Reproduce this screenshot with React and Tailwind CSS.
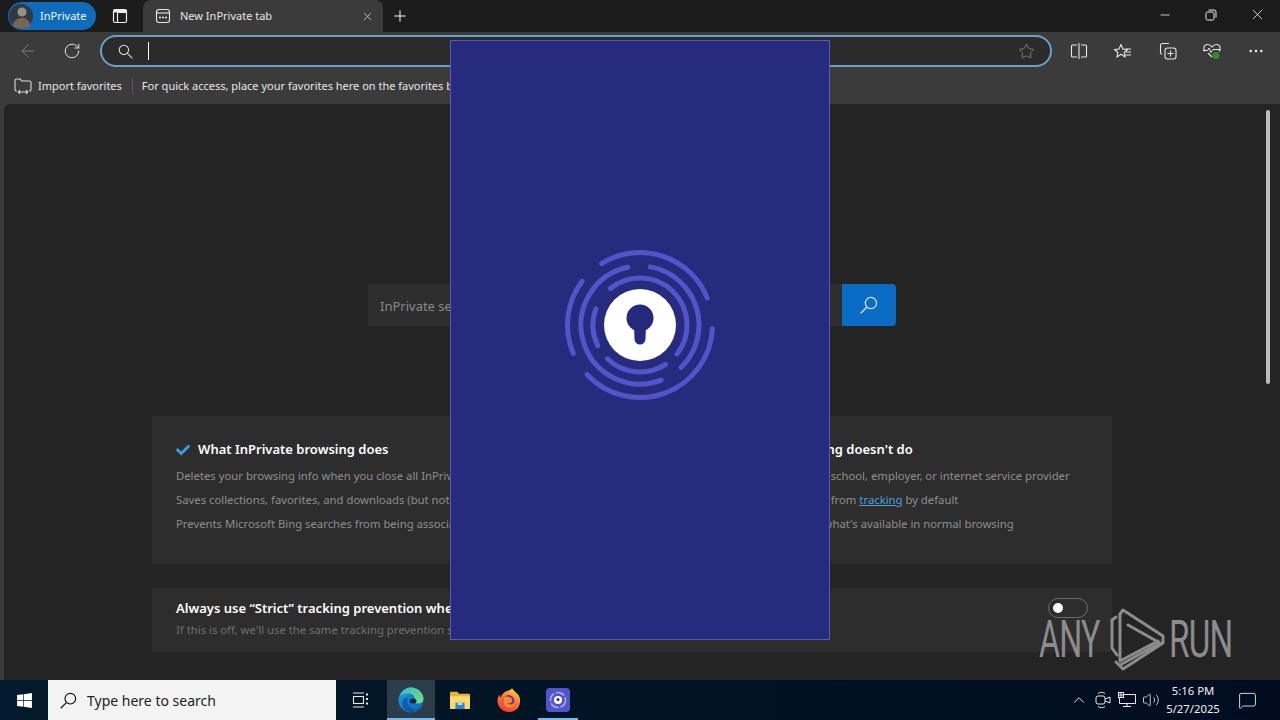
import React from "react";
import {
  ArrowLeft,
  RotateCw,
  Star,
  Plus,
  X,
  Minus,
  MoreHorizontal,
  ChevronUp,
  Volume2,
  MessageSquare,
} from "lucide-react";
import { FaWindows, FaCheck } from "react-icons/fa";

const FONT = "font-['Noto_Sans','Open_Sans',sans-serif]";

// logo rings: radius, from angle, to angle (degrees clockwise from the top)
const RINGS = [
  [72.5, -32, 68],
  [72.5, -113, -53],
  [72.5, 93, 227],
  [59, 159, 348],
  [59, 10, 136],
  [47, -39, 128],
  [47, -116, -70],
  [47, 147, 224],
];

const arcPath = (r, from, to) => {
  const pt = (a) => {
    const rad = (a * Math.PI) / 180;
    return `${(80 + r * Math.sin(rad)).toFixed(2)} ${(80 - r * Math.cos(rad)).toFixed(2)}`;
  };
  return `M${pt(from)} A${r} ${r} 0 ${to - from > 180 ? 1 : 0} 1 ${pt(to)}`;
};

const KeyLogo = () => (
  <svg width="160" height="160" viewBox="0 0 160 160">
    {RINGS.map(([r, from, to]) => (
      <path
        key={`${r}-${from}`}
        d={arcPath(r, from, to)}
        fill="none"
        stroke="#5155c8"
        strokeWidth="5"
        strokeLinecap="round"
      />
    ))}
    <circle cx="80" cy="80" r="36" fill="#fff" />
    <circle cx="80" cy="73" r="13.5" fill="#262a7c" />
    <path d="M74 78h12l-.5 16a5.5 5.5 0 0 1-11 0z" fill="#262a7c" />
  </svg>
);

// magnifier with a long thin handle; flip puts the handle lower-left
const SearchGlyph = ({ size = 16, color = "#e0e0e0", flip = false }) => (
  <svg
    width={size}
    height={size}
    viewBox="0 0 16 16"
    fill="none"
    stroke={color}
    strokeWidth="1.100"
    className={flip ? "-scale-x-100" : ""}
  >
    <circle cx="6.300" cy="6.300" r="5" />
    <path d="M10 10l5.300 5.300" />
  </svg>
);

const Avatar = () => (
  <svg width="24" height="24" viewBox="0 0 24 24">
    <circle cx="12" cy="12" r="12" fill="#2f3a44" />
    <circle cx="13" cy="8" r="4.500" fill="#9b8f84" />
    <path d="M4 22c0-5 4-8 9-8s8 3 8 8c-2 2-5 2-8 2s-7 0-9-2z" fill="#7a6553" />
  </svg>
);

const SplitIcon = () => (
  <svg width="18" height="18" viewBox="0 0 18 18" fill="none" stroke="#e8e8e8" strokeWidth="1.100">
    <path d="M7 3H2.500a1 1 0 0 0-1 1v10a1 1 0 0 0 1 1H7M11 3h4.500a1 1 0 0 1 1 1v10a1 1 0 0 1-1 1H11M9 1v16" />
  </svg>
);

const FavListIcon = () => (
  <svg width="20" height="18" viewBox="0 0 20 18" fill="none" stroke="#e8e8e8" strokeWidth="1.100">
    <path d="M8 1.500l2 4.600 4.600.4-3.500 3 1 4.600L8 11.200l-4.100 2.900 1-4.600-3.500-3 4.600-.4z" strokeLinejoin="round" transform="translate(0 1)" />
    <path d="M13 7h5M13 10h5M12 13h6" />
  </svg>
);

const CollectionsIcon = () => (
  <svg width="18" height="18" viewBox="0 0 18 18" fill="none" stroke="#e8e8e8" strokeWidth="1.100">
    <path d="M10 1.500H3.500a2 2 0 0 0-2 2V10c0 1 .5 2 1.500 2.500" />
    <rect x="6" y="6" width="11" height="11" rx="2.500" />
    <path d="M11.500 8.500v6M8.500 11.500h6" />
  </svg>
);

const HealthIcon = () => (
  <svg width="20" height="18" viewBox="0 0 20 18" fill="none">
    <path
      d="M3 9.500C1 7 1.500 2.500 5.500 2.500c2 0 3.500 1 4.500 2.500 1-1.500 2.500-2.500 4.500-2.500 4 0 4.500 4.500 2.500 7M10 15L6 11"
      stroke="#e8e8e8"
      strokeWidth="1.100"
    />
    <path d="M1 8.500h4.500l1.500-2.500 2 4.500 2-3h7" stroke="#e8e8e8" strokeWidth="1" />
    <circle cx="14" cy="13.500" r="3.500" fill="#2f8a3c" />
  </svg>
);

const ImportIcon = () => (
  <svg width="18" height="18" viewBox="0 0 18 18" fill="none" stroke="#dcdcdc" strokeWidth="1.100">
    <path d="M3 14H2.500a1.500 1.500 0 0 1-1.500-1.500v-9A1.500 1.500 0 0 1 2.500 2h3.500l2 2h7.500A1.500 1.500 0 0 1 17 5.500v7a1.500 1.500 0 0 1-1.500 1.500H15" />
    <path d="M4.500 15h9M6 13.200L4.300 15 6 16.800M12 13.200l1.700 1.800-1.700 1.800" />
  </svg>
);

const TabIcon = () => (
  <svg width="16" height="16" viewBox="0 0 16 16" fill="none" stroke="#e8e8e8" strokeWidth="1.100">
    <rect x="1.500" y="1.500" width="13" height="13" rx="2.500" />
    <path d="M1.500 5h13" />
    <circle cx="5" cy="9.500" r=".5" fill="#e8e8e8" />
    <circle cx="8" cy="9.500" r=".5" fill="#e8e8e8" />
    <circle cx="11" cy="9.500" r=".5" fill="#e8e8e8" />
  </svg>
);

const VerticalTabsIcon = () => (
  <svg width="16" height="16" viewBox="0 0 16 16" fill="none" stroke="#ececec" strokeWidth="1.200">
    <rect x="1.500" y="1.500" width="13" height="13" rx="1.500" />
    <path d="M5.500 5v9.500M5.500 4.500h9" />
    <path d="M2 2h13v2.500H2z" fill="#ececec" stroke="none" />
  </svg>
);

const RestoreIcon = () => (
  <svg width="12" height="12" viewBox="0 0 12 12" fill="none" stroke="#eee" strokeWidth="1">
    <rect x="1" y="3" width="8" height="8" rx="1.500" />
    <path d="M3.500 1h5.500a2 2 0 0 1 2 2v5.500" />
  </svg>
);

const EdgeIcon = () => (
  <svg width="26" height="26" viewBox="0 0 26 26">
    <defs>
      <linearGradient id="edgeBlue" x1="0" y1="0" x2="1" y2="1">
        <stop offset="0" stopColor="#1f9fe0" />
        <stop offset="1" stopColor="#0c5fb8" />
      </linearGradient>
      <linearGradient id="edgeGreen" x1="0" y1="0" x2="1" y2="1">
        <stop offset="0" stopColor="#2fc2c4" />
        <stop offset="1" stopColor="#7fdc7a" />
      </linearGradient>
    </defs>
    <circle cx="13" cy="13" r="12.500" fill="url(#edgeBlue)" />
    <path d="M2 9C4 3 9 .5 13 .5c7 0 12.500 5.500 12.500 11.500 0 3-2.500 4.500-5.500 4.500-2.500 0-4-1-4-2 2-3 0-8-5-8C7 6.500 4 7 2 9z" fill="url(#edgeGreen)" />
    <path d="M10 11c-2 4 1 10 7 12-1 1-2.500 2-4 2-4 0-8-3-9-8 0-3 3-7 6-6z" fill="#0b3f8f" opacity=".55" />
    <ellipse cx="15" cy="14" rx="3.500" ry="2.500" fill="#062538" />
  </svg>
);

const FolderIcon = () => (
  <svg width="22" height="20" viewBox="0 0 24 22">
    <path d="M1 3a1 1 0 0 1 1-1h7l2 2h11a1 1 0 0 1 1 1v3H1z" fill="#e2b23f" />
    <path d="M1 7h22v13a1 1 0 0 1-1 1H2a1 1 0 0 1-1-1z" fill="#fbd96b" />
    <path d="M7 14h10v7H7z" fill="#2f86c9" />
    <path d="M9.500 14h5v2.500h-5z" fill="#bcd9ef" />
  </svg>
);

const FirefoxIcon = () => (
  <svg width="24" height="24" viewBox="0 0 24 24">
    <defs>
      <linearGradient id="foxFlame" x1="0.7" y1="0" x2="0.2" y2="1">
        <stop offset="0" stopColor="#ffd23f" />
        <stop offset=".45" stopColor="#ff7a2a" />
        <stop offset="1" stopColor="#f0343c" />
      </linearGradient>
    </defs>
    <path d="M15 0c1 3 6 5 7.500 9 2 6-1 15-10.500 15C5 24 .5 18.500.5 13c0-3 1-5 2-6.500 0 1.500.5 2.500 1.500 3 .5-3 3-5.500 6-6.500 2-.5 4.500-1 5-3z" fill="url(#foxFlame)" />
    <circle cx="11.500" cy="13" r="6" fill="#6a2fb5" />
    <path d="M7 9c3-1 7 0 8 2 1 3-2 5-5 4 2 2 6 2 8-1 0 4-4 6-7 5.500C7 19 5 15 7 9z" fill="#ff8a2a" />
  </svg>
);

const AppIcon = () => (
  <svg width="24" height="24" viewBox="0 0 24 24">
    <rect width="24" height="24" rx="4" fill="#5155c8" />
    <circle cx="12" cy="12" r="7.500" fill="none" stroke="#aeb0ee" strokeWidth="1.500" strokeDasharray="9 2" />
    <circle cx="12" cy="12" r="4" fill="#fff" />
    <circle cx="12" cy="11.500" r="1.500" fill="#262a7c" />
  </svg>
);

const TrayCamera = () => (
  <svg width="16" height="18" viewBox="0 0 16 18" fill="none" stroke="#e8e8e8" strokeWidth="1">
    <rect x="1" y="5" width="9" height="8" rx="2" />
    <path d="M10 8l5-2v6l-5-2M3 2.500c2-1.500 5-1.500 7 0M3 15.500c2 1.500 5 1.500 7 0" />
  </svg>
);

const TrayNetwork = () => (
  <svg width="18" height="16" viewBox="0 0 18 16" fill="none" stroke="#e8e8e8" strokeWidth="1">
    <path d="M5 2.500h12.500v9H1.500V6" />
    <path d="M9 11.500v3M5 14.500h8" />
    <rect x=".5" y=".5" width="5" height="5" fill="#0a1a2a" />
    <path d="M3 .5v5M.5 3h5" />
  </svg>
);

const RunMark = () => (
  <svg width="70" height="70" viewBox="0 0 70 70" fill="none" stroke="#8c8c8c" strokeWidth="3" strokeLinejoin="round" strokeLinecap="round">
    <path d="M16 12l-4 3v28l5 7" />
    <path d="M20 9l3-4 40 26v7L23 64l-7-7" />
    <path d="M20 9v47l38-20" />
    <path d="M28 20l32 18-40 22" />
  </svg>
);

const ToolbarIcon = ({ children }) => (
  <span className="flex h-[28px] w-[44.250px] items-center justify-center">{children}</span>
);

const App = () => {
  return (
    <div className={`relative flex h-[720px] w-[1280px] flex-col overflow-hidden bg-[#3b3b3b] text-[#e6e6e6] ${FONT}`}>
      {/* title bar */}
      <div className="flex h-[32px] items-end bg-[#1c1c1c]">
        <div className="mb-[2px] ml-[8px] flex h-[28px] w-[88px] items-center gap-[7px] rounded-full bg-[#0f6cbd] pl-[1px]">
          <Avatar />
          <span className="text-[11px] text-[#f0f6fc]">InPrivate</span>
        </div>
        <div className="mb-[8px] ml-[16px] w-[16px]">
          <VerticalTabsIcon />
        </div>
        <div className="ml-[15px] flex h-[32px] w-[240px] items-center rounded-t-lg bg-[#3b3b3b] pl-[12px] pr-[9px]">
          <TabIcon />
          <span className="ml-[9px] flex-1 text-[11px] text-[#e6e6e6]">New InPrivate tab</span>
          <X size={13} strokeWidth={1.500} className="text-[#cfcfcf]" />
        </div>
        <Plus size={18} strokeWidth={1.300} className="mb-[7px] ml-[8px] text-white" />
        <div className="mb-[9px] ml-auto flex items-center text-[#eee]">
          <span className="flex w-[46px] justify-center">
            <Minus size={14} strokeWidth={1.400} />
          </span>
          <span className="flex w-[46px] justify-center">
            <RestoreIcon />
          </span>
          <span className="flex w-[46px] justify-center">
            <X size={17} strokeWidth={1.200} />
          </span>
        </div>
      </div>

      {/* address bar row */}
      <div className="flex h-[38px] items-center">
        <ArrowLeft size={20} strokeWidth={1.200} className="ml-[18px] text-[#7d7d7d]" />
        <RotateCw size={18} strokeWidth={1.300} className="ml-[25px] text-[#e8e8e8]" />
        <div className="ml-[19px] flex h-[32px] w-[952px] items-center rounded-full border-2 border-[#6a9fc9] bg-[#2b2b2b] pl-[16px] pr-[15px]">
          <SearchGlyph size={15} />
          <span className="ml-[15px] h-[18px] w-px bg-white" />
          <Star size={17} strokeWidth={1} className="ml-auto text-[#9a9a9a]" />
        </div>
        <div className="ml-[5px] flex">
          <ToolbarIcon>
            <SplitIcon />
          </ToolbarIcon>
          <ToolbarIcon>
            <FavListIcon />
          </ToolbarIcon>
          <ToolbarIcon>
            <CollectionsIcon />
          </ToolbarIcon>
          <ToolbarIcon>
            <HealthIcon />
          </ToolbarIcon>
          <ToolbarIcon>
            <MoreHorizontal size={18} strokeWidth={1.500} className="text-[#e8e8e8]" />
          </ToolbarIcon>
        </div>
      </div>

      {/* favorites bar */}
      <div className="flex h-[32px] items-center text-[11px] text-[#e6e6e6]">
        <span className="ml-[14px]">
          <ImportIcon />
        </span>
        <span className="ml-[6px]">Import favorites</span>
        <span className="ml-[10px] h-[16px] w-px bg-[#5a5a5a]" />
        <span className="ml-[9px] whitespace-nowrap">For quick access, place your favorites here on the favorites bar. Manage favorites now</span>
      </div>

      {/* page */}
      <div className="ml-[4px] mt-[2px] flex h-[576px] flex-col items-center overflow-hidden rounded-tl-md bg-[#242424] pr-[20px]">
        <div className="mt-[180px] flex h-[42px] w-[528px] shrink-0">
          <div className="flex flex-1 items-center bg-[#2e2e2e] pl-[12px] pt-[3px] text-[13px] text-[#8a8a8a]">InPrivate search</div>
          <div className="flex w-[54px] items-center justify-center rounded-r-sm bg-[#0a6cc4]">
            <SearchGlyph size={18} color="#d5ecff" flip />
          </div>
        </div>

        <div className="mt-[90px] flex h-[148px] w-[960px] shrink-0 bg-[#2d2d2d] pl-[24px] pt-[24px] text-[11.300px] text-[#8d8d8d]">
          <div className="w-[492px] shrink-0">
            <div className="flex h-[20px] items-center text-[13px] font-semibold text-white">
              <FaCheck size={14} className="mr-[8px] text-[#3a9ee6]" />
              What InPrivate browsing does
            </div>
            <p className="mt-[4px] h-[24px] leading-[24px]">Deletes your browsing info when you close all InPrivate windows</p>
            <p className="h-[24px] leading-[24px]">Saves collections, favorites, and downloads (but not your browsing info)</p>
            <p className="h-[24px] leading-[24px]">Prevents Microsoft Bing searches from being associated with you</p>
          </div>
          <div className="w-[440px] shrink-0 whitespace-nowrap">
            <div className="flex h-[20px] items-center pl-[18px] text-[13px] font-semibold text-white">What InPrivate browsing doesn't do</div>
            <p className="mt-[4px] h-[24px] leading-[24px]">Hide your browsing from your school, employer, or internet service provider</p>
            <p className="h-[24px] leading-[24px]">
              Give you additional protection from <span className="text-[#4a9fdc] underline">tracking</span> by default
            </p>
            <p className="h-[24px] leading-[24px]">Add more protection beyond what's available in normal browsing</p>
          </div>
        </div>

        <div className="mt-[24px] flex h-[64px] w-[960px] shrink-0 items-center justify-between bg-[#2d2d2d] pl-[24px] pr-[24px]">
          <div className="pb-[3px]">
            <div className="h-[20px] text-[13px] font-semibold leading-[20px] text-white">Always use “Strict” tracking prevention when browsing InPrivate</div>
            <div className="mt-[4px] text-[11.300px] text-[#6f6f6f]">If this is off, we'll use the same tracking prevention settings as in normal browsing</div>
          </div>
          <span className="mb-[24px] flex h-[20px] w-[40px] items-center rounded-full border border-[#6a6a6a] pl-[4px]">
            <span className="h-[10px] w-[10px] rounded-full bg-white" />
          </span>
        </div>
      </div>

      {/* page scrollbar */}
      <span className="absolute left-[1266px] top-[110px] h-[274px] w-[4px] rounded-full bg-[#bdbdbd]" />

      {/* taskbar */}
      <div className="absolute inset-x-0 bottom-0 flex h-[40px] items-center bg-gradient-to-r from-[#021a2b] to-[#010c20] text-[#f0f0f0]">
        <span className="flex w-[48px] justify-center">
          <FaWindows size={17} className="text-white" />
        </span>
        <div className="flex h-[40px] w-[288px] items-center bg-[#f3f3f3] pl-[12px] text-[14px] text-[#222]">
          <SearchGlyph size={17} color="#111" flip />
          <span className="ml-[10px]">Type here to search</span>
        </div>
        <span className="ml-[15px] flex w-[20px] justify-center">
          <svg width="18" height="16" viewBox="0 0 18 16" fill="none" stroke="#e8e8e8" strokeWidth="1.100">
            <path d="M1 1h11M1 15h11" />
            <rect x="1.500" y="4.500" width="10" height="7" />
            <path d="M15 1.500v2M15 6v2M15 10.500v2" strokeWidth="2" />
          </svg>
        </span>
        <div className="relative ml-[16px] flex h-[40px] w-[48px] items-center justify-center bg-[#2a3d49]">
          <EdgeIcon />
          <span className="absolute inset-x-0 bottom-0 h-[2px] bg-[#76b9ed]" />
        </div>
        <span className="ml-[13px] flex w-[24px] justify-center">
          <FolderIcon />
        </span>
        <span className="ml-[25px] flex w-[24px] justify-center">
          <FirefoxIcon />
        </span>
        <div className="relative ml-[13px] flex h-[40px] w-[48px] items-center justify-center">
          <AppIcon />
          <span className="absolute inset-x-[4px] bottom-0 h-[2px] bg-[#76b9ed]" />
        </div>
        <div className="ml-auto flex items-center">
          <ChevronUp size={18} strokeWidth={1.300} className="text-[#e8e8e8]" />
          <span className="ml-[7px]">
            <TrayCamera />
          </span>
          <span className="ml-[7px]">
            <TrayNetwork />
          </span>
          <Volume2 size={18} strokeWidth={1.100} className="ml-[6px] text-[#e8e8e8]" />
          <div className="ml-[1px] w-[64px] text-center text-[11.300px] leading-[18px]">
            <div>5:16 PM</div>
            <div>5/27/2025</div>
          </div>
          <MessageSquare size={19} strokeWidth={1.100} className="ml-[13px] mr-[23px] text-[#f0f0f0]" />
        </div>
      </div>

      {/* watermark */}
      <div className="absolute left-[1039px] top-[605px] flex h-[70px] items-center text-[#8c8c8c]">
        <span className="w-[61px] origin-left scale-x-[0.62] text-[52px] leading-[70px] tracking-tight font-['Roboto',sans-serif]">ANY</span>
        <RunMark />
        <span className="-ml-[1px] w-[60px] origin-left scale-x-[0.64] text-[52px] leading-[70px] tracking-tight font-['Roboto',sans-serif]">RUN</span>
      </div>

      {/* splash window over the browser */}
      <div className="absolute left-[450px] top-[40px] flex h-[600px] w-[380px] items-center justify-center border border-[#585cae] bg-[#272b7d] pb-[30px]">
        <KeyLogo />
      </div>
    </div>
  );
};

export default App;
